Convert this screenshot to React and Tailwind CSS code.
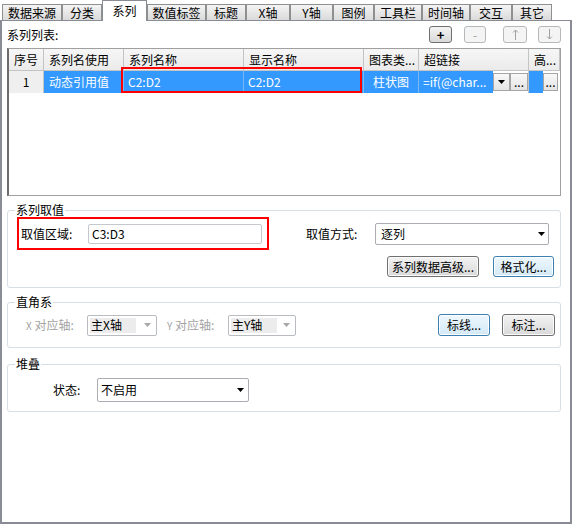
import React from "react";

function Tri({ color = "#000" }) {
  return (
    <svg width="7" height="4" viewBox="0 0 7 4" className="shrink-0">
      <path d="M0 0h7L3.5 4z" fill={color} />
    </svg>
  );
}

const tabs = [
  ["数据来源", "w-[60px]"],
  ["分类", "w-[40px]"],
  ["系列", "w-[45px]", true],
  ["数值标签", "w-[59px]"],
  ["标题", "w-[40px]"],
  ["X轴", "w-[44px]"],
  ["Y轴", "w-[43px]"],
  ["图例", "w-[41px]"],
  ["工具栏", "w-[48px]"],
  ["时间轴", "w-[48px]"],
  ["交互", "w-[42px]"],
  ["其它", "w-[40px]"],
];

function TabStrip() {
  return (
    <div className="flex items-end h-[21px] pl-[2px] border-b border-[#898c95]">
      {tabs.map(([label, w, active]) =>
        active ? (
          <div
            key={label}
            className={`${w} h-[21px] -mb-px bg-white border-t border-x border-[#898c95] flex items-start justify-center pt-[3px] leading-[14px]`}
          >
            {label}
          </div>
        ) : (
          <div
            key={label}
            className={`${w} h-[16px] border-t border-x border-[#8e8f8f] bg-linear-to-b from-[#f4f4f4] to-[#dadada] flex items-center justify-center leading-[14px] whitespace-nowrap`}
          >
            {label}
          </div>
        )
      )}
    </div>
  );
}

function Btn({ w, h = "h-[21px]", focus, children }) {
  return (
    <div
      className={`${w} ${h} rounded-[3px] border flex items-center justify-center whitespace-nowrap ${
        focus
          ? "border-[#3c7fb1] bg-linear-to-b from-[#eef7fd] to-[#d3e9f6] shadow-[inset_0_0_0_1px_#ffffff]"
          : "border-[#707070] bg-linear-to-b from-[#f3f3f3] to-[#d9d9d9] shadow-[inset_0_0_0_1px_#fbfbfb]"
      }`}
    >
      {children}
    </div>
  );
}

function SmallBtn({ w, disabled, children }) {
  return (
    <div
      className={`${w} h-[17px] rounded-[3px] border flex items-center justify-center ${
        disabled
          ? "border-[#b5b9bc] bg-[#f4f4f4] text-[#a0a0a0]"
          : "border-[#707070] bg-linear-to-b from-[#f3f3f3] to-[#d9d9d9] text-black"
      }`}
    >
      {children}
    </div>
  );
}

function Select({ w, h, pl, pr, children }) {
  return (
    <div
      className={`${w} ${h} ${pl} ${pr} border border-[#abadb3] rounded-[2px] bg-white flex items-center`}
    >
      <span className="flex-1">{children}</span>
      <Tri />
    </div>
  );
}

function DisSelect({ w, children }) {
  return (
    <div
      className={`${w} h-[21px] border border-[#b8bcc0] rounded-[2px] bg-white flex items-center pr-[5px]`}
    >
      <div className="ml-[2px] w-[46px] h-[15px] bg-[#ececec] pl-[1px] flex items-center">
        {children}
      </div>
      <span className="flex-1" />
      <Tri color="#a8a8a8" />
    </div>
  );
}

function Group({ title, className = "", children }) {
  return (
    <fieldset
      className={`w-[554px] border border-[#d5dfe5] rounded-[3px] ${className}`}
    >
      <legend className="ml-[7px] px-[1px] leading-[14px]">{title}</legend>
      {children}
    </fieldset>
  );
}

function HeadCell({ w, children, center }) {
  return (
    <div
      className={`${w} h-full shrink-0 bg-linear-to-b from-[#f6f6f6] to-[#ebebeb] border-r border-b border-[#c4c4c4] flex items-center ${
        center ? "justify-center" : "pl-[5px]"
      } whitespace-nowrap overflow-hidden`}
    >
      {children}
    </div>
  );
}

function MiniBtn({ w, children }) {
  return (
    <div
      className={`${w} h-[18px] shrink-0 bg-linear-to-b from-[#f8f8f8] to-[#e4e4e4] border border-[#a5a5a5] flex items-center justify-center text-black`}
    >
      {children}
    </div>
  );
}

function Table() {
  return (
    <div className="relative w-[554px] h-[148px] border border-[#a0a0a0] border-l-2 border-l-[#6b6b6b] bg-white">
      <div className="flex h-[22px]">
        <HeadCell w="w-[35px]" center>序号</HeadCell>
        <HeadCell w="w-[80px]">系列名使用</HeadCell>
        <HeadCell w="w-[120px]">系列名称</HeadCell>
        <HeadCell w="w-[120px]">显示名称</HeadCell>
        <HeadCell w="w-[55px]">图表类...</HeadCell>
        <HeadCell w="w-[110px]">超链接</HeadCell>
        <HeadCell w="w-[31px]">高...</HeadCell>
      </div>
      <div className="flex h-[22px] text-white">
        <div className="w-[35px] h-full shrink-0 bg-[#efefef] border-r border-[#c4c4c4] text-black flex items-center justify-center">
          1
        </div>
        <div className="w-[80px] h-full shrink-0 bg-[#3399ff] border-r border-[#7ab8f5] flex items-center pl-[5px]">
          动态引用值
        </div>
        <div className="w-[120px] h-full shrink-0 bg-[#3399ff] border-r border-[#7ab8f5] flex items-center pl-[4px]">
          C2:D2
        </div>
        <div className="w-[120px] h-full shrink-0 bg-[#3399ff] border-r border-[#7ab8f5] flex items-center pl-[4px]">
          C2:D2
        </div>
        <div className="w-[55px] h-full shrink-0 bg-[#3399ff] border-r border-[#7ab8f5] flex items-center justify-center">
          柱状图
        </div>
        <div className="w-[110px] h-full shrink-0 flex items-center border-r border-[#c4c4c4]">
          <div className="w-[74px] h-full bg-[#3399ff] flex items-center pl-[4px] whitespace-nowrap overflow-hidden">
            =if(@char...
          </div>
          <MiniBtn w="w-[17px]">
            <Tri />
          </MiniBtn>
          <MiniBtn w="w-[18px]">...</MiniBtn>
        </div>
        <div className="w-[31px] h-full shrink-0 flex items-center">
          <div className="w-[14px] h-full bg-[#3399ff]" />
          <MiniBtn w="w-[15px]">...</MiniBtn>
        </div>
      </div>
      <div className="absolute left-[112px] top-[18px] w-[241px] h-[26px] border-2 border-[#ff0000]" />
    </div>
  );
}

function UpArrow() {
  return (
    <svg width="7" height="11" viewBox="0 0 7 11">
      <path d="M3.5 1V11M1 3.5L3.5 1L6 3.5" stroke="#a0a0a0" fill="none" strokeWidth="1" />
    </svg>
  );
}

function DownArrow() {
  return (
    <svg width="7" height="11" viewBox="0 0 7 11">
      <path d="M3.5 0V10M1 7.5L3.5 10L6 7.5" stroke="#a0a0a0" fill="none" strokeWidth="1" />
    </svg>
  );
}

export default function App() {
  return (
    <div className="w-[572px] h-[524px] bg-white text-[12px] leading-[14px] text-black font-['Noto_Sans_CJK_SC','Noto_Sans',sans-serif] overflow-hidden">
      <TabStrip />
      <div className="h-[503px] border-x-2 border-b-2 border-[#898c95] px-[5px]">
        <div className="flex items-center h-[27px] pr-[4px]">
          <span>系列列表:</span>
          <div className="ml-auto flex items-center">
            <SmallBtn w="w-[23px]">
              <span className="font-bold text-[13px]">+</span>
            </SmallBtn>
            <div className="ml-[12px]">
              <SmallBtn w="w-[22px]" disabled>
                -
              </SmallBtn>
            </div>
            <div className="ml-[17px]">
              <SmallBtn w="w-[24px]" disabled>
                <UpArrow />
              </SmallBtn>
            </div>
            <div className="ml-[11px]">
              <SmallBtn w="w-[23px]" disabled>
                <DownArrow />
              </SmallBtn>
            </div>
          </div>
        </div>

        <Table />

        <Group title="系列取值" className="mt-[7px]">
          <div className="flex items-center h-[33px] pl-[9px]">
            <div className="w-[252px] h-[33px] border-2 border-[#ff0000] flex items-center justify-between pl-[2px] pr-[5px]">
              <span>取值区域:</span>
              <div className="w-[174px] h-[20px] border border-[#c5c8cc] rounded-[2px] bg-white flex items-center pl-[3px]">
                C3:D3
              </div>
            </div>
            <span className="ml-[37px] w-[69px]">取值方式:</span>
            <Select w="w-[174px]" h="h-[22px]" pl="pl-[5px]" pr="pr-[3px]">
              逐列
            </Select>
          </div>
          <div className="flex justify-end gap-[14px] pr-[6px] mt-[6px] pb-[10px]">
            <Btn w="w-[92px]">系列数据高级...</Btn>
            <Btn w="w-[61px]" focus>
              格式化...
            </Btn>
          </div>
        </Group>

        <Group title="直角系" className="mt-[7px]">
          <div className="flex items-center h-[22px] mt-[5px] mb-[11px] pl-[18px] pr-[5px]">
            <span className="w-[61px] text-[#a3a3a3] whitespace-nowrap">
              <span className="text-[10px]">X</span> 对应轴:
            </span>
            <DisSelect w="w-[70px]">主X轴</DisSelect>
            <span className="ml-[10px] w-[61px] text-[#a3a3a3] whitespace-nowrap">
              <span className="text-[10px]">Y</span> 对应轴:
            </span>
            <DisSelect w="w-[68px]">主Y轴</DisSelect>
            <div className="ml-auto flex gap-[12px]">
              <Btn w="w-[52px]" h="h-[22px]" focus>
                标线...
              </Btn>
              <Btn w="w-[53px]" h="h-[22px]">
                标注...
              </Btn>
            </div>
          </div>
        </Group>

        <Group title="堆叠" className="mt-[9px]">
          <div className="flex items-center pt-[7px] pb-[9px] pl-[45px]">
            <span className="w-[44px]">状态:</span>
            <Select w="w-[152px]" h="h-[24px]" pl="pl-[3px]" pr="pr-[4px]">
              不启用
            </Select>
          </div>
        </Group>
      </div>
    </div>
  );
}
